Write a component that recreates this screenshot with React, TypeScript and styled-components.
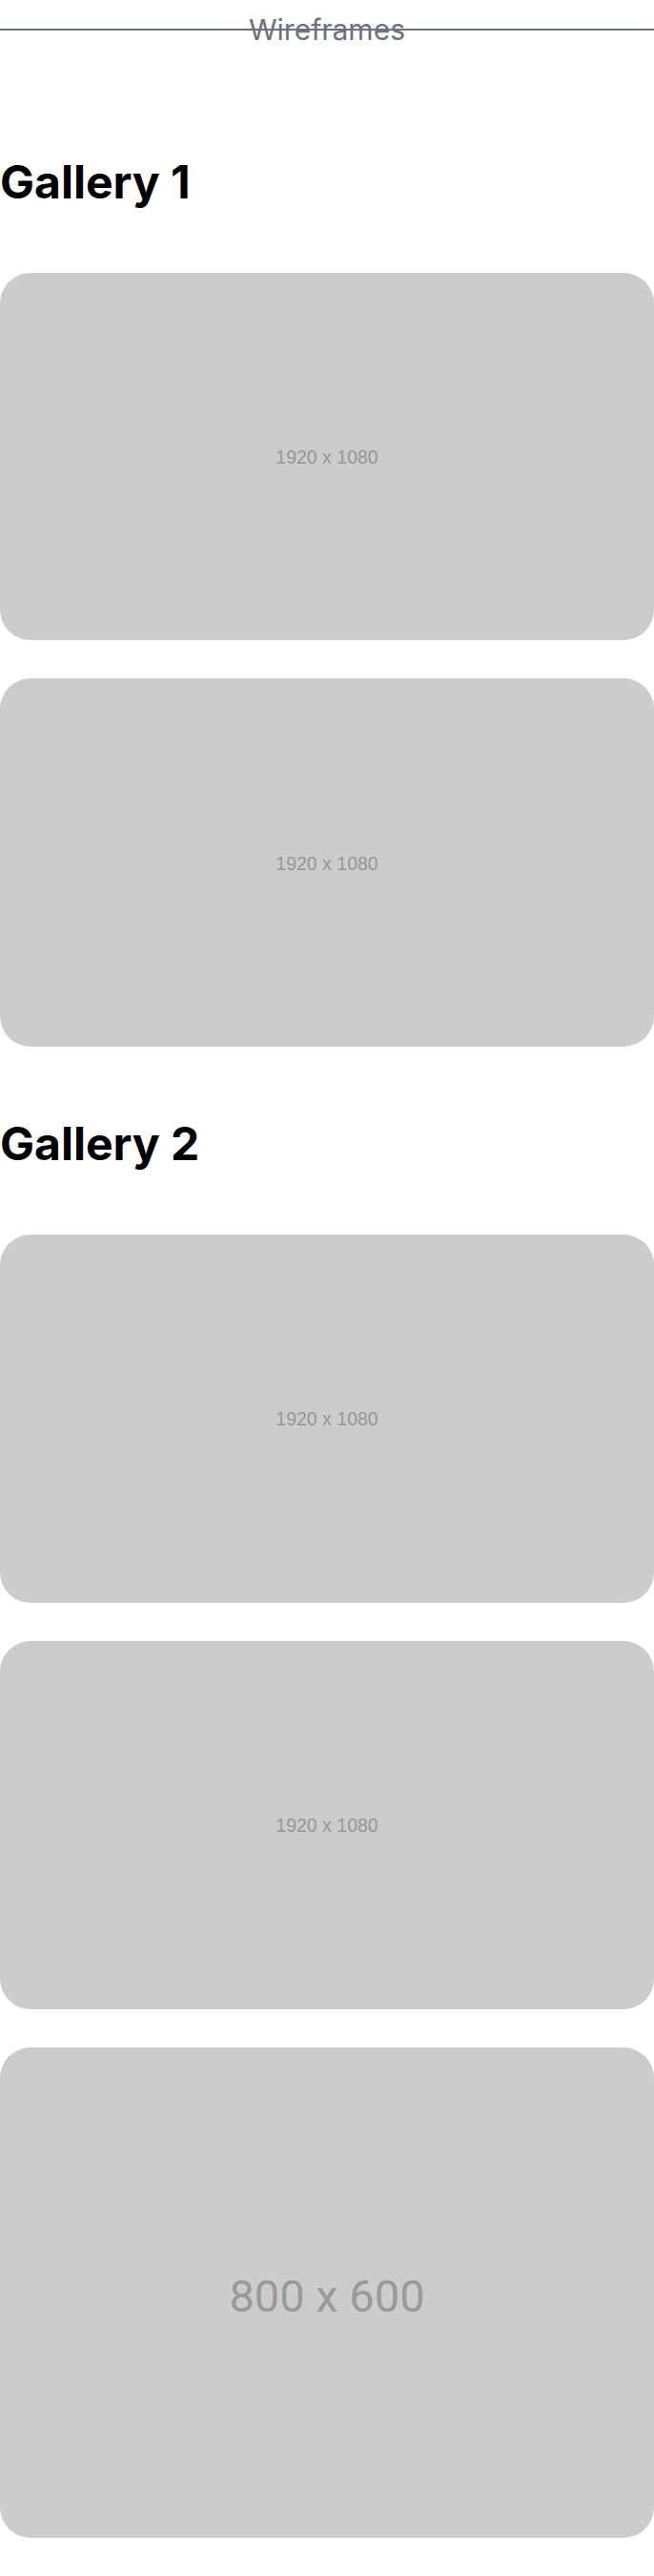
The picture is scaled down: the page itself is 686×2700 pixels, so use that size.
import React from "react";
import styled, { createGlobalStyle } from "styled-components";

const GlobalStyle = createGlobalStyle`
  html, body {
    margin: 0;
    padding: 0;
    background: #ffffff;
  }
  body {
    font-family: Inter, "Liberation Sans", Arial, sans-serif;
  }
  * { box-sizing: border-box; }
`;

const Page = styled.main`
  display: flex;
  flex-direction: column;
  width: 686px;
  padding-bottom: 39px;
`;

const Header = styled.header`
  display: grid;
  height: 89px;
  padding-top: 12.5px;
  align-content: start;
`;

const HeaderStack = styled.div`
  display: grid;
  align-items: center;
  justify-items: center;
`;

const HeaderLine = styled.div`
  grid-area: 1 / 1;
  justify-self: stretch;
  height: 2px;
  background: #6b7280;
`;

const HeaderTitle = styled.span`
  grid-area: 1 / 1;
  font-family: Inter, "Liberation Sans", Arial, sans-serif;
  font-size: 30px;
  font-weight: 400;
  line-height: normal;
  color: #6b7280;
`;

const Section = styled.section`
  display: flex;
  flex-direction: column;
  padding-top: 77.6px;
`;

const Heading = styled.h2`
  margin: 0;
  font-family: Inter, "Liberation Sans", Arial, sans-serif;
  font-size: 48px;
  font-weight: 700;
  line-height: 48px;
  color: #000000;
`;

const ImageList = styled.div`
  display: flex;
  flex-direction: column;
  gap: 40px;
  margin-top: 71px;
`;

const Placeholder = styled.div<{ $ratio: string }>`
  display: flex;
  align-items: center;
  justify-content: center;
  width: 100%;
  aspect-ratio: ${(p) => p.$ratio};
  background: #cccccc;
  border-radius: 32px;
`;

const PlaceholderLabel = styled.span<{ $large?: boolean }>`
  font-family: ${(p) =>
    p.$large ? 'Roboto, "Liberation Sans", Arial, sans-serif' : '"Liberation Sans", Arial, sans-serif'};
  font-size: ${(p) => (p.$large ? "47px" : "19.5px")};
  line-height: 1;
  padding-top: ${(p) => (p.$large ? "8px" : "2px")};
  color: ${(p) => (p.$large ? "#9a9a9a" : "#969696")};
`;

type Img = { w: number; h: number; large?: boolean };

const galleries: { title: string; images: Img[] }[] = [
  {
    title: "Gallery 1",
    images: [
      { w: 1920, h: 1080 },
      { w: 1920, h: 1080 },
    ],
  },
  {
    title: "Gallery 2",
    images: [
      { w: 1920, h: 1080 },
      { w: 1920, h: 1080 },
      { w: 800, h: 600, large: true },
    ],
  },
];

export default function App() {
  return (
    <>
      <GlobalStyle />
      <Page>
        <Header>
          <HeaderStack>
            <HeaderLine />
            <HeaderTitle>Wireframes</HeaderTitle>
          </HeaderStack>
        </Header>
        {galleries.map((g) => (
          <Section key={g.title}>
            <Heading>{g.title}</Heading>
            <ImageList>
              {g.images.map((img, i) => (
                <Placeholder key={i} $ratio={`${img.w} / ${img.h}`}>
                  <PlaceholderLabel $large={img.large}>
                    {img.w} x {img.h}
                  </PlaceholderLabel>
                </Placeholder>
              ))}
            </ImageList>
          </Section>
        ))}
      </Page>
    </>
  );
}
